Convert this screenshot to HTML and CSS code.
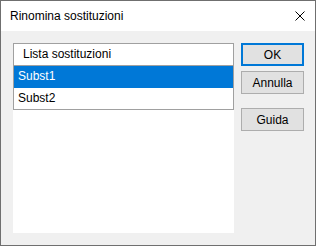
FILE: index.html
```html
<!DOCTYPE html>
<html lang="it">
<head>
    <meta charset="UTF-8">
    <meta name="viewport" content="width=device-width, initial-scale=1.0">
    <title>Rinomina sostituzioni</title>
    <link rel="stylesheet" href="styles.css">
</head>
<body>
    <div class="dialog">
        <div class="title-bar">
            <span class="title">Rinomina sostituzioni</span>
            <svg class="close" width="10" height="10" viewBox="0 0 10 10">
                <path d="M0.5 0.5 L9.5 9.5 M9.5 0.5 L0.5 9.5" stroke="#000" stroke-width="1" fill="none"/>
            </svg>
        </div>

        <div class="content">
            <div class="list-box">
                <div class="grid">
                    <div class="row header">Lista sostituzioni</div>
                    <div class="row selected">Subst1</div>
                    <div class="row">Subst2</div>
                </div>
            </div>

            <div class="buttons">
                <button class="btn default">OK</button>
                <button class="btn">Annulla</button>
                <button class="btn help">Guida</button>
            </div>
        </div>
    </div>
</body>
</html>
```
FILE: styles.css
```css
body {
    margin: 0;
    font-family: "Liberation Sans", Arial, sans-serif;
    font-size: 12px;
    color: #000;
}

.dialog {
    width: 316px;
    height: 246px;
    box-sizing: border-box;
    border: 1px solid #6f6f6f;
    display: flex;
    flex-direction: column;
    background-color: #f0f0f0;
}

.title-bar {
    height: 30px;
    background-color: #fff;
    display: flex;
    align-items: center;
    justify-content: space-between;
    padding: 0 9px 1px 9px;
    box-sizing: border-box;
}

.title {
    font-size: 12px;
}

.close {
    margin-right: 1px;
}

.content {
    flex: 1;
    display: flex;
    padding: 12px 11px 12px 12px;
}

.list-box {
    width: 221px;
    background-color: #fff;
}

.grid {
    border: 1px solid #a0a0a0;
}

.row {
    height: 21px;
    line-height: 21px;
    padding-left: 4px;
    border-bottom: 1px solid #a0a0a0;
}

.row:last-child {
    border-bottom: none;
}

.header {
    padding-left: 9px;
}

.selected {
    background-color: #0078d7;
    color: #fff;
    border-bottom-color: #0078d7;
}

.buttons {
    margin-left: 7px;
    display: flex;
    flex-direction: column;
}

.btn {
    width: 63px;
    height: 23px;
    margin-bottom: 5px;
    background-color: #e1e1e1;
    border: 1px solid #adadad;
    font-family: inherit;
    font-size: 12px;
    color: #000;
    padding: 0;
}

.btn.default {
    border: 2px solid #0078d7;
}

.btn.help {
    margin-top: 9px;
}
```
